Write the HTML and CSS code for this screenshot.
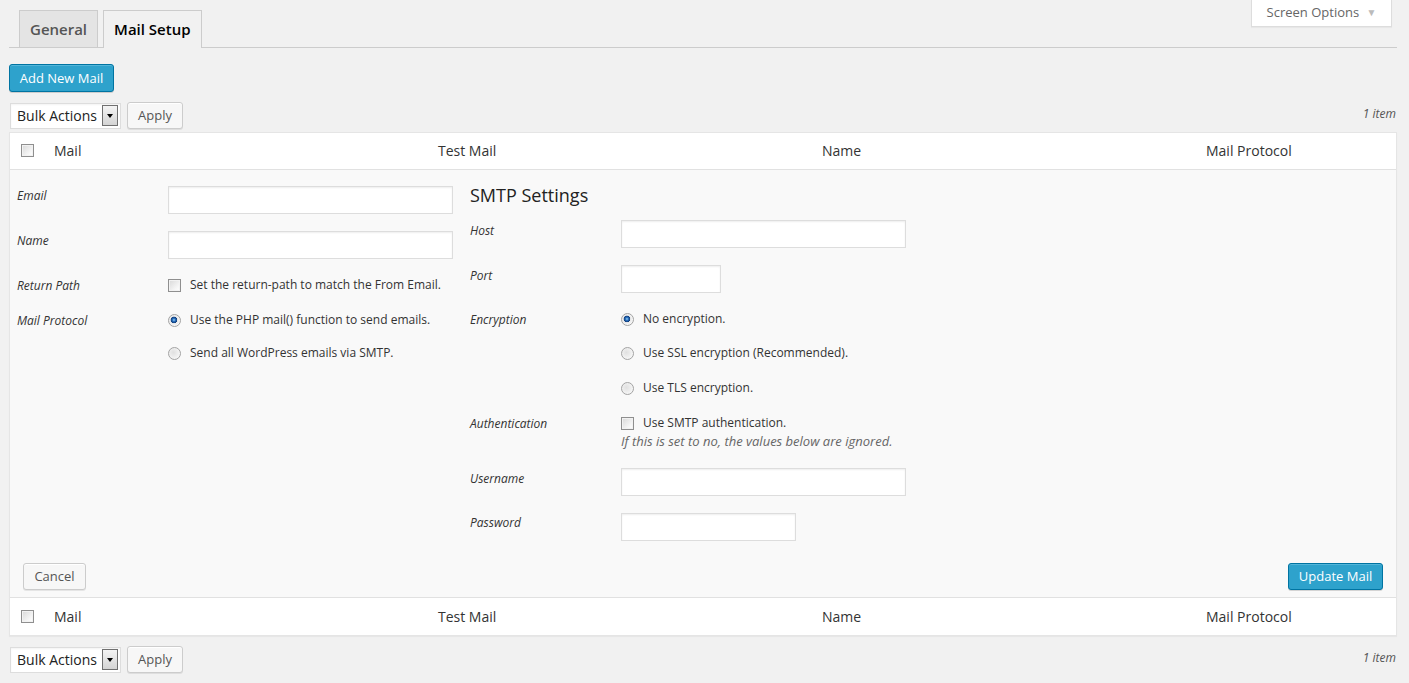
FILE: index.html
```html
<!DOCTYPE html>
<html>
<head>
<meta charset="utf-8">
<link rel="stylesheet" href="styles.css">
</head>
<body>
<div class="screen-meta">
  <button class="screen-options">Screen Options <span class="so-arrow">▼</span></button>
</div>
<div class="wrap">
  <div class="nav-tabs">
    <a class="nav-tab">General</a>
    <a class="nav-tab active">Mail Setup</a>
  </div>

  <div class="actions-top">
    <button class="btn primary">Add New Mail</button>
  </div>

  <div class="tablenav">
    <span class="select">Bulk Actions<span class="sel-arrow"><span class="tri"></span></span></span>
    <button class="btn">Apply</button>
    <span class="count">1 item</span>
  </div>

  <div class="table">
    <div class="thead">
      <div class="cell cb"><input type="checkbox" class="chk"></div>
      <div class="cell">Mail</div>
      <div class="cell">Test Mail</div>
      <div class="cell">Name</div>
      <div class="cell">Mail Protocol</div>
    </div>

    <div class="edit-row">
      <div class="fieldsets">
        <div class="fieldset left">
          <div class="row input-row">
            <div class="label">Email</div>
            <input type="text" class="text wide">
          </div>
          <div class="row input-row">
            <div class="label">Name</div>
            <input type="text" class="text wide">
          </div>
          <div class="row check-row">
            <div class="label">Return Path</div>
            <label class="opt"><input type="checkbox" class="chk">Set the return-path to match the From Email.</label>
          </div>
          <div class="row radio-row short">
            <div class="label">Mail Protocol</div>
            <label class="opt"><input type="radio" class="rad" name="proto" checked>Use the PHP mail() function to send emails.</label>
          </div>
          <div class="row radio-row">
            <div class="label"></div>
            <label class="opt"><input type="radio" class="rad" name="proto">Send all WordPress emails via SMTP.</label>
          </div>
        </div>

        <div class="fieldset right">
          <h3 class="smtp-title">SMTP Settings</h3>
          <div class="row input-row">
            <div class="label">Host</div>
            <input type="text" class="text wide">
          </div>
          <div class="row input-row">
            <div class="label">Port</div>
            <input type="text" class="text port">
          </div>
          <div class="row radio-row short1">
            <div class="label">Encryption</div>
            <label class="opt"><input type="radio" class="rad" name="enc" checked>No encryption.</label>
          </div>
          <div class="row radio-row">
            <div class="label"></div>
            <label class="opt"><input type="radio" class="rad" name="enc">Use SSL encryption (Recommended).</label>
          </div>
          <div class="row radio-row">
            <div class="label"></div>
            <label class="opt"><input type="radio" class="rad" name="enc">Use TLS encryption.</label>
          </div>
          <div class="row auth-row">
            <div class="label">Authentication</div>
            <div class="field">
              <label class="opt"><input type="checkbox" class="chk">Use SMTP authentication.</label>
              <p class="desc">If this is set to no, the values below are ignored.</p>
            </div>
          </div>
          <div class="row input-row">
            <div class="label">Username</div>
            <input type="text" class="text wide">
          </div>
          <div class="row input-row last">
            <div class="label">Password</div>
            <input type="password" class="text pass">
          </div>
        </div>
      </div>
      <div class="edit-buttons">
        <button class="btn">Cancel</button>
        <button class="btn primary">Update Mail</button>
      </div>
    </div>

    <div class="tfoot">
      <div class="cell cb"><input type="checkbox" class="chk"></div>
      <div class="cell">Mail</div>
      <div class="cell">Test Mail</div>
      <div class="cell">Name</div>
      <div class="cell">Mail Protocol</div>
    </div>
  </div>

  <div class="tablenav bottom">
    <span class="select">Bulk Actions<span class="sel-arrow"><span class="tri"></span></span></span>
    <button class="btn">Apply</button>
    <span class="count">1 item</span>
  </div>
</div>
</body>
</html>
```

FILE: styles.css
```css
* { box-sizing: border-box; }

html, body {
  margin: 0;
  padding: 0;
  background: #f1f1f1;
  font-family: "Open Sans", "Liberation Sans", sans-serif;
  font-size: 13px;
  color: #444;
}

button {
  font-family: inherit;
}

.screen-meta {
  position: absolute;
  top: 0;
  right: 17px;
}

.screen-options {
  width: 141px;
  height: 27px;
  background: #fff;
  border: 1px solid #ddd;
  border-top: none;
  box-shadow: 0 1px 1px rgba(0,0,0,.04);
  color: #666;
  font-size: 13px;
  padding: 0 0 2px 0;
  text-align: center;
}

.so-arrow {
  color: #bbb;
  font-size: 10px;
  margin-left: 4px;
  position: relative;
  top: -1px;
}

.wrap {
  padding: 0 12px 0 9px;
}

.nav-tabs {
  display: flex;
  padding-left: 10px;
  padding-top: 10px;
  border-bottom: 1px solid #ccc;
  height: 48px;
}

.nav-tab {
  display: block;
  height: 37px;
  line-height: 36px;
  padding: 0 10px;
  margin-right: 5px;
  background: #e4e4e4;
  border: 1px solid #ccc;
  border-bottom: none;
  font-size: 15px;
  font-weight: 600;
  color: #555;
}

.nav-tab.active {
  background: #f1f1f1;
  color: #000;
  height: 38px;
}

.actions-top {
  padding-top: 16px;
}

.btn {
  display: inline-block;
  height: 27px;
  line-height: 25px;
  padding: 0 10px;
  font-size: 13px;
  border: 1px solid #ccc;
  border-radius: 3px;
  background: #f7f7f7;
  color: #555;
  box-shadow: inset 0 1px 0 #fff, 0 1px 0 rgba(0,0,0,.08);
}

.btn.primary {
  background: #2ea2cc;
  border-color: #0074a2;
  color: #fff;
  box-shadow: inset 0 1px 0 rgba(120,200,230,.5), 0 1px 0 rgba(0,0,0,.15);
  height: 28px;
}

.actions-top .btn.primary {
  width: 105px;
  padding: 0;
  display: block;
}

.tablenav {
  display: flex;
  align-items: center;
  height: 27px;
  margin-top: 10px;
  margin-bottom: 3px;
}

.tablenav.bottom {
  margin-top: 10px;
}

.select {
  display: inline-flex;
  align-items: center;
  height: 26px;
  width: 111px;
  margin-left: 1px;
  padding-left: 6px;
  background: #fff;
  border: 1px solid #ddd;
  box-shadow: inset 0 1px 2px rgba(0,0,0,.05);
  font-size: 14px;
  color: #222;
  justify-content: space-between;
  padding-right: 2px;
}

.sel-arrow {
  width: 16px;
  height: 21px;
  border: 1px solid #707070;
  background: linear-gradient(#f4f4f4, #d4d4d4);
  display: flex;
  align-items: center;
  justify-content: center;
}

.tri {
  width: 0;
  height: 0;
  border-left: 3.5px solid transparent;
  border-right: 3.5px solid transparent;
  border-top: 4px solid #000;
}

.tablenav .btn {
  margin-left: 6px;
  width: 56px;
  padding: 0;
  height: 27px;
}

.count {
  margin-left: auto;
  font-style: italic;
  color: #555;
  font-size: 12px;
  margin-right: 1px;
  margin-bottom: 4px;
}

.table {
  background: #fff;
  border: 1px solid #e5e5e5;
  box-shadow: 0 1px 1px rgba(0,0,0,.04);
}

.thead, .tfoot {
  display: grid;
  grid-template-columns: 34px 384px 384px 384px 1fr;
  align-items: center;
  font-size: 14px;
  color: #333;
}

.thead {
  border-bottom: 1px solid #e1e1e1;
  height: 37px;
  padding-bottom: 2px;
}

.tfoot {
  border-top: 1px solid #e1e1e1;
  height: 38px;
}

.cell {
  padding-left: 10px;
}

.cell.cb {
  padding-left: 11px;
  display: flex;
  align-items: center;
}

.chk {
  -webkit-appearance: none;
  appearance: none;
  width: 13px;
  height: 13px;
  margin: 0;
  border: 1px solid #8f8f8f;
  background: linear-gradient(135deg, #d8d8d8, #f6f6f6 70%, #fff);
  box-shadow: inset 0 0 0 1px #f2f2f2;
  flex: none;
}

.rad {
  -webkit-appearance: none;
  appearance: none;
  width: 13px;
  height: 13px;
  margin: 0;
  border-radius: 50%;
  border: 1px solid #a3a3a3;
  background: radial-gradient(circle at 40% 40%, #e0e0e0, #f8f8f8 80%);
  flex: none;
}

.rad:checked {
  background: radial-gradient(circle at 45% 45%, #9fd3f5 0, #2a72c0 1.5px, #123e7c 3px, #e9e9e9 3.6px, #f7f7f7 6px);
}

.edit-row {
  background: #f9f9f9;
  padding: 16px 13px 7px 7px;
}

.fieldsets {
  display: flex;
}

.fieldset.left {
  width: 453px;
}

.fieldset.right {
  flex: 1;
}

.row {
  display: flex;
  align-items: flex-start;
}

.label {
  width: 151px;
  flex: none;
  font-style: italic;
  font-size: 12px;
  line-height: 18px;
  padding-top: 1px;
  color: #333;
}

.right .input-row .label {
  padding-top: 2px;
}

.right .input-row.user .label,
.right .input-row.last .label {
  padding-top: 1px;
}

.input-row {
  height: 45px;
}

.input-row.last {
  height: 28px;
}

.check-row {
  height: 35px;
}

.radio-row {
  height: 35px;
}

.radio-row.short {
  height: 33px;
}

.radio-row.short1 {
  height: 34px;
}

.opt {
  display: flex;
  align-items: center;
  height: 18px;
  line-height: 18px;
  font-size: 12px;
  color: #333;
}

.opt .chk, .opt .rad {
  margin-right: 9px;
}

.text {
  height: 28px;
  border: 1px solid #ddd;
  background: #fff;
  box-shadow: inset 0 1px 2px rgba(0,0,0,.07);
  margin: 0;
  padding: 3px 5px;
  font-family: inherit;
}

.text.wide { width: 285px; }
.text.port { width: 100px; }
.text.pass { width: 175px; }

.smtp-title {
  margin: 0;
  font-size: 18px;
  font-weight: 400;
  line-height: 18px;
  height: 34px;
  color: #222;
}

.auth-row {
  height: 54px;
}

.desc {
  margin: 0;
  font-style: italic;
  font-size: 13px;
  line-height: 18px;
  color: #666;
}

.edit-buttons {
  display: flex;
  justify-content: space-between;
  padding-left: 6px;
  margin-top: 22px;
}

.edit-buttons .btn {
  height: 27px;
}

.edit-buttons .btn:first-child {
  width: 63px;
  padding: 0;
}

.edit-buttons .btn.primary {
  width: 95px;
  padding: 0;
}
```
